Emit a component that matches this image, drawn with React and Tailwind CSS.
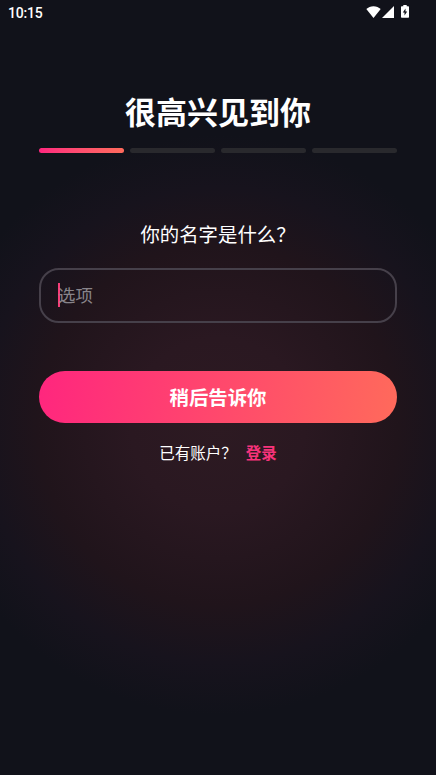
import React, { useState } from 'react';

const STEPS = 4;

const StatusBar = () => (
    <div className="flex h-6 items-center justify-between pl-2 pr-[27px]">
        <span className="pt-px font-['Roboto',sans-serif] text-[14px] font-medium leading-none tracking-[-0.2px]">10:15</span>
        <div className="flex h-[14px] items-center">
            <svg width="15" height="12" viewBox="0 0 15 12" fill="currentColor">
                <path d="M7.5 12 0.3 3.1C2.2 1.4 4.7 0.3 7.5 0.3s5.3 1.1 7.2 2.8z" />
            </svg>
            <svg className="ml-px" width="12" height="12" viewBox="0 0 12 12" fill="currentColor">
                <path d="M0 12 12 0v12z" />
            </svg>
            <svg className="mb-px ml-[7px]" width="8" height="13" viewBox="0 0 8 13" fill="currentColor">
                <path
                    fillRule="evenodd"
                    d="M2.3 0h3.4v1.2H7.3c.4 0 .7.3.7.7v10.2c0 .4-.3.7-.7.7H.7c-.4 0-.7-.3-.7-.7V1.9c0-.4.3-.7.7-.7h1.6zM4.5 3.6 1.8 7.6h1.7v3L6.2 6.5H4.5z"
                />
            </svg>
        </div>
    </div>
);

const Progress = ({ current }) => (
    <div className="mt-4 grid grid-cols-4 gap-1.5">
        {Array.from({ length: STEPS }, (_, i) => (
            <div
                key={i}
                className={
                    i < current
                        ? 'h-[5px] rounded-full bg-linear-to-r from-[#ff267e] to-[#ff6a5b]'
                        : 'h-[5px] rounded-full bg-[#29292d]'
                }
            />
        ))}
    </div>
);

const App = () => {
    const [name, setName] = useState('');

    return (
        <div className="h-[775px] w-full overflow-hidden bg-[#11121a] bg-[radial-gradient(circle_290px_at_50%_425px,#2d1a22_0%,#2a1821_30%,#20141b_62%,#17131d_82%,#11121a_100%)] font-['Noto_Sans_CJK_SC',sans-serif] text-white">
            <StatusBar />

            <main className="px-[39px] pt-[65px]">
                <h1 className="text-center text-[31px] font-bold leading-[43px]">很高兴见到你</h1>
                <Progress current={1} />

                <form onSubmit={(e) => e.preventDefault()}>
                    <label htmlFor="name" className="mt-[67px] block text-center text-[19.4px] leading-7">
                        你的名字是什么？
                    </label>

                    <div className="mt-5 flex h-[55px] items-center rounded-[20px] border-2 border-[#46404a] px-[17px] pb-0.5">
                        {/* caret sits on top of the first placeholder glyph */}
                        <span className="-mr-0.5 h-6 w-0.5 shrink-0 bg-[#f63d78]" />
                        <input
                            id="name"
                            type="text"
                            value={name}
                            onChange={(e) => setName(e.target.value)}
                            placeholder="选项"
                            className="w-full bg-transparent text-[17.4px] leading-6 caret-[#f63d78] outline-none placeholder:text-[#88848a]"
                        />
                    </div>

                    <button
                        type="submit"
                        className="mt-12 flex h-[52px] w-full items-center justify-center rounded-full bg-linear-[98deg] from-[#ff267e] to-[#ff6a5b] text-[19.4px] font-bold"
                    >
                        稍后告诉你
                    </button>
                </form>

                <p className="mt-[17px] flex justify-center gap-[9px] text-[15.5px] leading-6">
                    <span>已有账户？</span>
                    <a href="#login" className="font-bold text-[#f7337b]">登录</a>
                </p>
            </main>
        </div>
    );
};

export default App;
